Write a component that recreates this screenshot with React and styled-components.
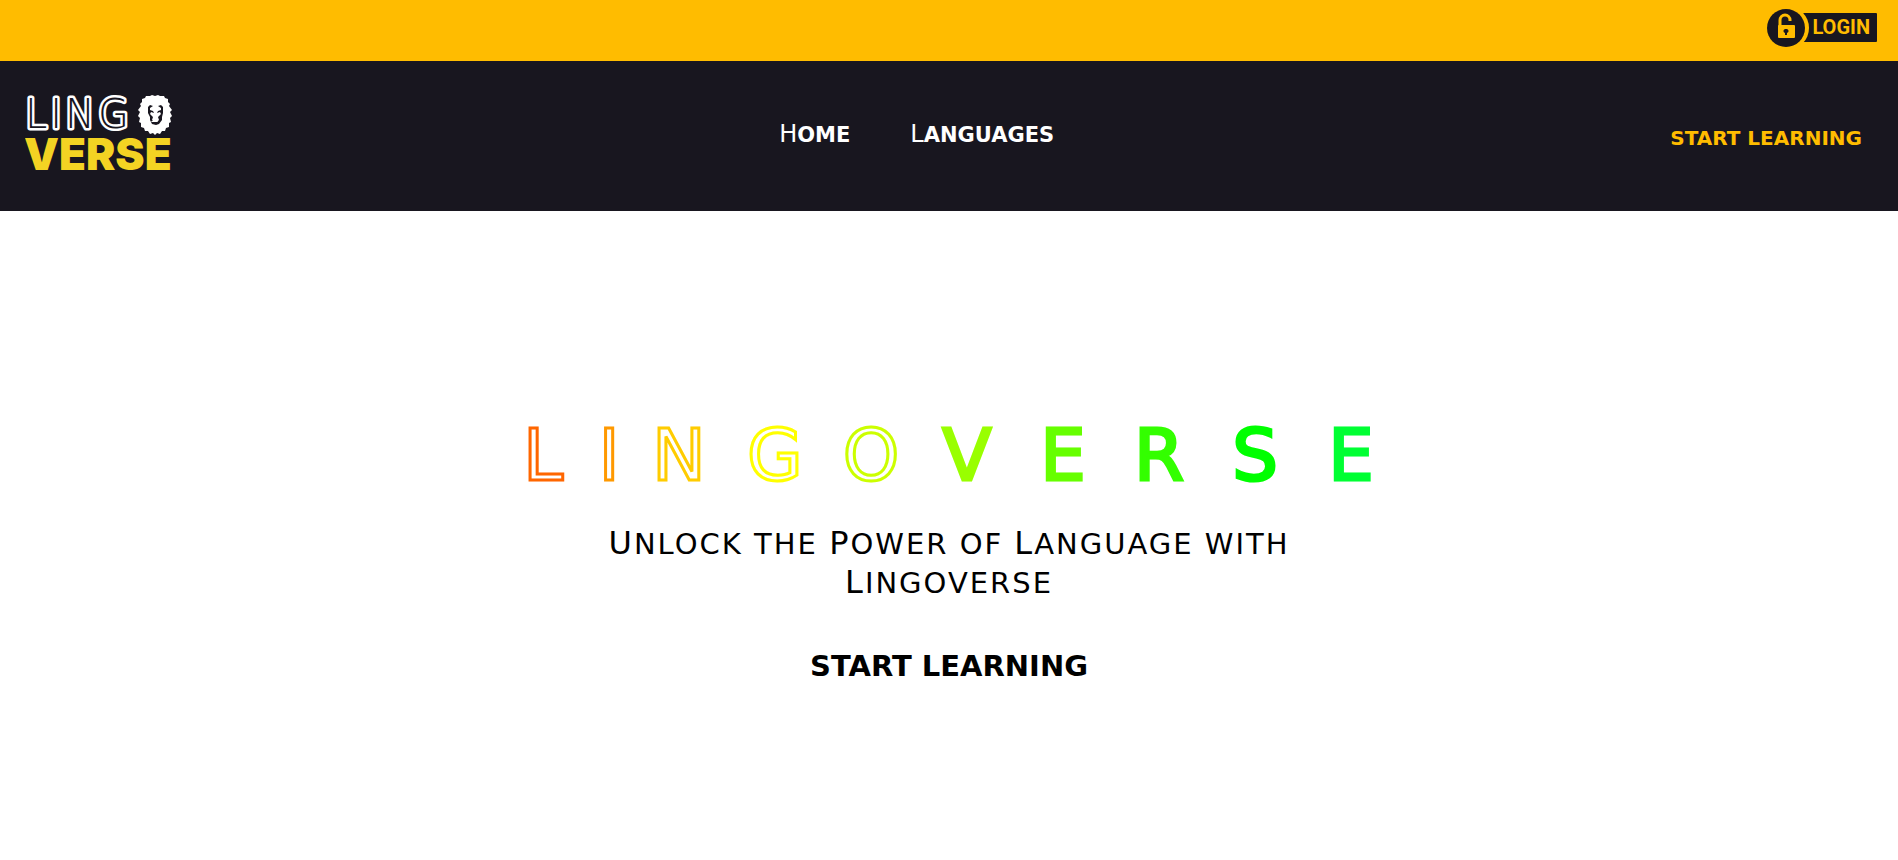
import React from "react";
import styled, { createGlobalStyle, css } from "styled-components";

const ink = "#18161f";
const amber = "#ffbc00";

const GlobalStyle = createGlobalStyle`
  *, *::before, *::after { box-sizing: border-box; }
  body { margin: 0; background: #fff; color: #000; font-family: "DejaVu Sans", Verdana, sans-serif; }
  a { color: inherit; text-decoration: none; }
`;

const TopBar = styled.div`
  display: flex;
  align-items: center;
  justify-content: flex-end;
  height: 61px;
  padding: 0 21px 6px;
  background: ${amber};
`;

const LoginButton = styled.button`
  display: flex;
  align-items: center;
  padding: 0;
  border: 0;
  background: none;
  cursor: pointer;
`;

const LockBadge = styled.svg`
  display: block;
  width: 42px;
  height: 42px;
  z-index: 1;
`;

const LoginLabel = styled.span`
  height: 29px;
  margin-left: -6px;
  padding: 0 7px 0 9px;
  border-radius: 1px;
  background: ${ink};
  color: ${amber};
  font: bold 20px/29px Roboto, sans-serif;
`;

const Header = styled.header`
  display: flex;
  align-items: center;
  justify-content: space-between;
  min-height: 150px;
  padding: 0 24px 4px 25px;
  background: ${ink};
`;

const LogoArt = styled.svg`
  display: block;
  width: 150px;
  height: 100px;
`;

const Nav = styled.nav`
  display: flex;
  gap: 60px;
`;

const NavLink = styled.a`
  display: block;
  color: #fff;
  font-size: 21px;
  font-weight: 700;
  line-height: 30px;
  text-transform: uppercase;
  &::first-letter { font-size: 24px; font-weight: 400; }
`;

const ActionButton = styled.button`
  padding: ${(p) => (p.$large ? "0" : "8px 12px 0")};
  border: 0;
  background: none;
  cursor: pointer;
  font-family: inherit;
  font-weight: 700;
  text-transform: uppercase;
  color: ${(p) => (p.$large ? "#000" : amber)};
  font-size: ${(p) => (p.$large ? 29 : 20)}px;
  line-height: ${(p) => (p.$large ? 36 : 24)}px;
`;

const Hero = styled.main`
  display: flex;
  flex-direction: column;
  align-items: center;
  padding: 199px 24px 64px;
`;

const Title = styled.h1`
  display: flex;
  justify-content: center;
  gap: 32px;
  margin: 0;
  font-size: 72px;
  font-weight: 400;
  line-height: 90px;
`;

const letterWidths = { L: 56, I: 12 };

const Letter = styled.span`
  display: flex;
  justify-content: center;
  width: ${(p) => letterWidths[p.children] || 64}px;
  color: ${(p) => (p.$outlined ? "transparent" : p.$tint)};
  -webkit-text-stroke: 3px ${(p) => p.$tint};
`;

const Tagline = styled.p`
  max-width: 720px;
  margin: 24px 0 46px;
  font-size: 29px;
  line-height: 38px;
  letter-spacing: 2px;
  text-align: center;
  text-transform: uppercase;
`;

const Word = styled.span`
  display: inline-block;
  ${(p) => p.$capital && css`&::first-letter { font-size: 32px; }`}
`;

const titleLetters = [
  ["L", "#ff6600", true],
  ["I", "#ff9900", true],
  ["N", "#ffcc00", true],
  ["G", "#ffff00", true],
  ["O", "#ccff00", true],
  ["V", "#99ff00", false],
  ["E", "#66ff00", false],
  ["R", "#33ff00", false],
  ["S", "#00ff00", false],
  ["E", "#00ff33", false],
];

const tagline = "Unlock the Power of Language with Lingoverse".split(" ");

function Logo() {
  return (
    <LogoArt viewBox="0 -12 150 100" role="img" aria-label="Lingoverse">
      <text x="0" y="32" fontFamily="DejaVu Sans, sans-serif" fontSize="40" fontWeight="200" letterSpacing="3" fill={ink}
        stroke="#fff" strokeWidth="5" strokeLinejoin="round" paintOrder="stroke">LING</text>
      <g transform="translate(113 -1)">
        <path fill="#fff" d="M17 1l3-1 2 1 4 0 1 2 3 1 0 3 2 2-1 2 3 4-2 2 2 4-2 2 1 4-2 1 0 4-3 1-1 3-3 0-2 3-3-1-2 2-2-2-3 1-2-3-3 0-1-3-3-1 0-4-2-1 1-4-2-2 2-4-2-2 3-4-1-2 2-2 0-3 3-1 1-2 4 0 2-1z" />
        <path fill={ink} d="M10 12l2-2 3 1-3 2 0 2 3 1 1 2-3-1-1 2 3 3-1 3 2 2 3 0 2-2-1-3 3-3-1-2-3 1 1-2 3-1 0-2-3-2 3-1 2 2 0 6-1 4 0 3-3 4-3 1-4-1-2-4 0-3-2-4z" />
        <path fill="#fff" d="M13 26h7l-1 1h-5z" />
      </g>
      <text x="-1" y="74" fontFamily="Inter, sans-serif" fontSize="44" fontWeight="900" fill="#f3d323">VERSE</text>
    </LogoArt>
  );
}

function LockIcon() {
  return (
    <LockBadge viewBox="0 0 42 42" aria-hidden="true">
      <circle cx="20" cy="21" r="22" fill={amber} />
      <circle cx="19" cy="21" r="19" fill={ink} />
      <path d="M14 20v-6a5 5 0 0 1 10 0v1" transform="translate(-1 -1)" fill="none" stroke={amber} strokeWidth="3" />
      <rect x="11" y="18" width="17" height="13" rx="1" fill={amber} />
      <path d="M19 22a2 2 0 0 1 1 4v2h-2v-2a2 2 0 0 1 1-4z" fill={ink} />
    </LockBadge>
  );
}

export default function App() {
  return (
    <>
      <GlobalStyle />
      <TopBar>
        <LoginButton type="button">
          <LockIcon />
          <LoginLabel>LOGIN</LoginLabel>
        </LoginButton>
      </TopBar>
      <Header>
        <a href="#home"><Logo /></a>
        <Nav aria-label="Main">
          <NavLink href="#home">Home</NavLink>
          <NavLink href="#languages">Languages</NavLink>
        </Nav>
        <ActionButton type="button">Start Learning</ActionButton>
      </Header>
      <Hero>
        <Title aria-label="Lingoverse">
          {titleLetters.map(([letter, tint, outlined], i) => (
            <Letter key={i} $tint={tint} $outlined={outlined}>{letter}</Letter>
          ))}
        </Title>
        <Tagline>
          {tagline.map((word) => (
            <React.Fragment key={word}>
              <Word $capital={/^[A-Z]/.test(word)}>{word}</Word>{" "}
            </React.Fragment>
          ))}
        </Tagline>
        <ActionButton type="button" $large>Start Learning</ActionButton>
      </Hero>
    </>
  );
}
